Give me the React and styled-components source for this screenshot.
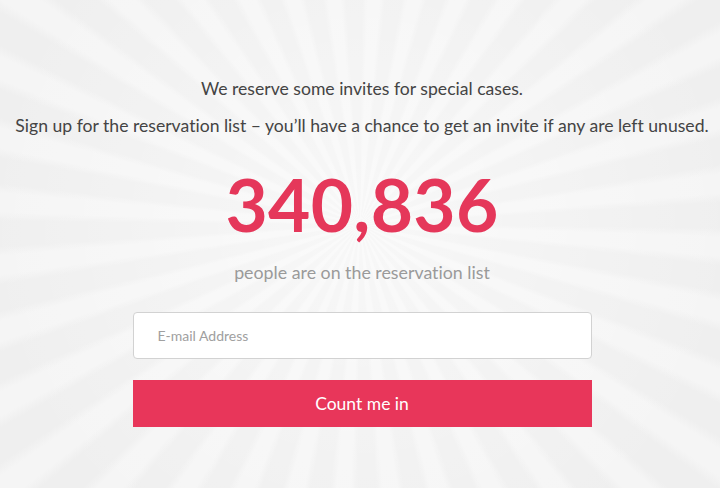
import React from "react";
import styled, { createGlobalStyle } from "styled-components";

const GlobalStyle = createGlobalStyle`
  html, body {
    margin: 0;
    padding: 0;
  }
  body {
    font-family: Lato, "Open Sans", sans-serif;
    font-variant-ligatures: none;
    background: #efefef;
  }
`;

const Page = styled.div`
  width: 720px;
  height: 488px;
  overflow: hidden;
  box-sizing: border-box;
  padding: 76px 0 0 4px;
  display: flex;
  flex-direction: column;
  align-items: center;
  background:
    radial-gradient(circle at 50% 46%, rgba(255, 255, 255, 0.55) 0, rgba(255, 255, 255, 0) 380px),
    repeating-conic-gradient(from 2deg at 50% 46%, #f5f5f5 0deg 3deg, #efefef 4.5deg 8.5deg, #f5f5f5 10deg);
`;

const Intro = styled.p`
  margin: 0 0 ${({ gap }) => gap || 0}px;
  font-size: 17.6px;
  line-height: 26px;
  color: #444;
  text-align: center;
  white-space: nowrap;
`;

const Count = styled.div`
  margin-top: 25px;
  font-size: 73px;
  line-height: 80px;
  font-weight: 700;
  color: #e5375a;
  letter-spacing: 0.3px;
`;

const Caption = styled.div`
  margin-top: 16px;
  font-size: 17.8px;
  line-height: 24px;
  color: #9a9a9a;
`;

const Form = styled.form`
  margin-top: 28px;
  width: 459px;
  display: flex;
  flex-direction: column;
  gap: 21px;
`;

const EmailInput = styled.input`
  box-sizing: border-box;
  height: 47px;
  width: 100%;
  padding: 0 24px;
  border: 1px solid #d2d2d2;
  border-radius: 4px;
  background: #fff;
  font-family: Lato, "Open Sans", sans-serif;
  font-size: 14px;
  color: #333;
  outline: none;

  &::placeholder {
    color: #a0a0a0;
  }
`;

const Submit = styled.button`
  height: 47px;
  width: 100%;
  border: none;
  background: #e8365a;
  color: #fff;
  font-family: Lato, "Open Sans", sans-serif;
  font-variant-ligatures: none;
  font-size: 17.5px;
  cursor: pointer;
`;

export default function App() {
  return (
    <>
      <GlobalStyle />
      <Page>
        <Intro gap={11}>We reserve some invites for special cases.</Intro>
        <Intro>
          Sign up for the reservation list – you’ll have a chance to get an invite if any are left unused.
        </Intro>
        <Count>340,836</Count>
        <Caption>people are on the reservation list</Caption>
        <Form onSubmit={(e) => e.preventDefault()}>
          <EmailInput type="email" placeholder="E-mail Address" />
          <Submit type="submit">Count me in</Submit>
        </Form>
      </Page>
    </>
  );
}
